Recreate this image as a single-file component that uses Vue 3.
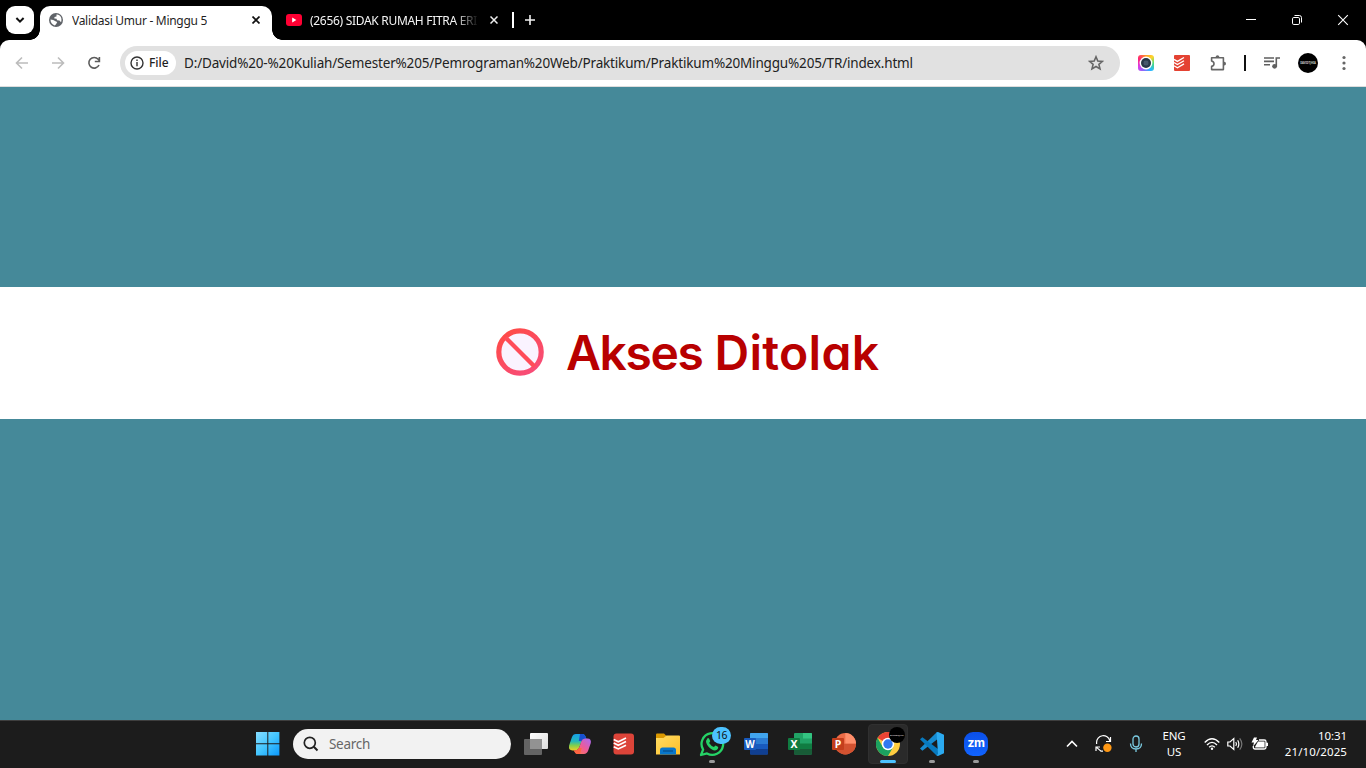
<script setup>
const url = 'D:/David%20-%20Kuliah/Semester%205/Pemrograman%20Web/Praktikum/Praktikum%20Minggu%205/TR/index.html'
</script>

<template>
  <div class="screen">
    <header class="tabstrip">
      <button class="tab-search" aria-label="Search tabs">
        <svg width="10" height="8" viewBox="0 0 10 8"><path d="M1.4 2 5 5.6 8.6 2" fill="none" stroke="#111" stroke-width="2" /></svg>
      </button>
      <div class="tab active">
        <svg class="favicon" width="14" height="14" viewBox="0 0 14 14">
          <circle cx="7" cy="7" r="7" fill="#5f6368" />
          <path d="M7.5 1.5C9 1.2 11 2.3 12 4.2 12.7 6 12.6 8 12 9.2L10.4 7.6 8 7.3 7.6 5.7 5.3 5.5 5.5 4 7.5 3.5ZM1.5 6.5 4.2 7 6.5 8.3 8.2 9.1 7.2 11 5.8 12.4C3.2 11.5 1.3 9.3 1.5 6.5Z" fill="#fff" />
        </svg>
        <span class="title t1">Validasi Umur - Minggu 5</span>
        <svg class="close" width="8" height="8" viewBox="0 0 8 8"><path d="M.5.5 7.5 7.5M7.5.5.5 7.5" stroke="#111" stroke-width="1.7" /></svg>
      </div>
      <div class="tab inactive">
        <svg class="favicon" width="16" height="12" viewBox="0 0 16 12"><rect width="16" height="12" rx="3" fill="#f03" /><path d="M6.2 3.6 10.4 6 6.2 8.4Z" fill="#fff" /></svg>
        <span class="title t2">(2656) SIDAK RUMAH FITRA ERI</span>
        <svg class="close" width="8" height="8" viewBox="0 0 8 8"><path d="M.5.5 7.5 7.5M7.5.5.5 7.5" stroke="#eee" stroke-width="1.5" /></svg>
      </div>
      <i class="tab-sep"></i>
      <svg class="plus" width="12" height="12" viewBox="0 0 12 12"><path d="M6 1V11M1 6H11" stroke="#f1f1f1" stroke-width="1.6" /></svg>
      <div class="win">
        <svg width="46" height="40" viewBox="0 0 46 40"><path d="M18 19.5H28" stroke="#fff" /></svg>
        <svg width="46" height="40" viewBox="0 0 46 40" fill="none" stroke="#fff"><rect x="18.5" y="17.5" width="7" height="7" rx="1.3" /><path d="M20.5 15.5H25.3Q27.5 15.5 27.5 17.7V22.5" /></svg>
        <svg width="46" height="40" viewBox="0 0 46 40"><path d="M18.2 15.2 27.8 24.8M27.8 15.2 18.2 24.8" stroke="#fff" stroke-width="1.1" /></svg>
      </div>
    </header>

    <nav class="toolbar">
      <svg width="36" height="34" viewBox="0 0 36 34" fill="none" stroke="#bcbcbc" stroke-width="1.6"><path d="M20 17H9M14 11.5 8.5 17 14 22.5" /></svg>
      <svg width="36" height="34" viewBox="0 0 36 34" fill="none" stroke="#bcbcbc" stroke-width="1.6"><path d="M8 17H19M14 11.5 19.5 17 14 22.5" /></svg>
      <svg width="40" height="34" viewBox="0 0 40 34" fill="none" stroke="#5c5c5c" stroke-width="1.6"><path d="M19 19A5.3 5.3 0 1 1 18.2 13.3L19.5 14.8M19.4 11V15.5H14.8" /></svg>
      <div class="omnibox">
        <div class="chip">
          <svg width="14" height="14" viewBox="0 0 14 14"><circle cx="7" cy="7" r="6" fill="none" stroke="#333" stroke-width="1.4" /><path d="M7 6V10.3M7 3.6V5" stroke="#333" stroke-width="1.4" /></svg>
          <span class="file">File</span>
        </div>
        <span class="url">{{ url }}</span>
        <svg class="star" width="16" height="16" viewBox="0 0 16 16"><path d="M8 1.8 9.8 6 14.4 6.4 10.9 9.4 12 13.9 8 11.5 4 13.9 5.1 9.4 1.6 6.4 6.2 6Z" fill="none" stroke="#666" stroke-width="1.6" /></svg>
      </div>
      <div class="exts">
        <div class="cell"><div class="lens"><svg width="16" height="16" viewBox="0 0 16 16"><circle cx="8" cy="8" r="6.4" fill="#fff" /><circle cx="8" cy="8" r="5" fill="#263745" /><circle cx="8" cy="8" r="3" fill="#46586b" stroke="#2b3d4d" /></svg></div></div>
        <div class="cell"><svg width="16" height="16" viewBox="0 0 16 16"><rect width="16" height="16" rx="1" fill="#e44232" /><path d="M0 5.4 3.4 7.4 10 3.5M0 8.6 3.4 10.6 10 6.7M0 11.8 3.4 13.8 10 9.9" transform="translate(0 -1)" fill="none" stroke="#fff" stroke-width="1.3" /></svg></div>
        <div class="cell"><svg width="18" height="18" viewBox="0 0 18 18"><path d="M2.6 3.8H14.4V15.6H2.6V12.4Q5 11.8 5 9.7T2.6 7Z" fill="none" stroke="#666" stroke-width="1.6" stroke-linejoin="round" /><path d="M6.6 3.8V3Q6.8 1.2 8.5 1.2T10.4 3V3.8ZM14.4 7.8H15.2Q17 8 17 9.7T15.2 11.6H14.4Z" fill="#666" /></svg></div>
        <i class="bar"></i>
        <div class="cell"><svg width="16" height="14" viewBox="0 0 16 14"><path d="M0 2H10M0 5.4H10M0 8.8H6M12.3 10V2H16" fill="none" stroke="#5f5f5f" stroke-width="1.6" /><circle cx="10.6" cy="10.3" r="2.4" fill="#5f5f5f" /></svg></div>
        <div class="cell"><div class="avatar"><span>DAVIDTJHIA</span></div></div>
        <div class="cell"><svg width="4" height="16" viewBox="0 0 4 16" fill="#666"><circle cx="2" cy="2.5" r="1.6" /><circle cx="2" cy="8" r="1.6" /><circle cx="2" cy="13.5" r="1.6" /></svg></div>
      </div>
    </nav>

    <main class="page">
      <section class="band">
        <svg class="ban" width="48" height="48" viewBox="0 0 48 48">
          <defs><linearGradient id="banRing" x1="0" y1="0" x2=".7" y2="1"><stop offset="0" stop-color="#ff4b43" /><stop offset="1" stop-color="#f84c76" /></linearGradient></defs>
          <circle cx="24" cy="24" r="21.2" fill="#faf3ff" stroke="url(#banRing)" stroke-width="5.2" />
          <path d="M9.5 9.5 38.5 38.5" stroke="#ff4c59" stroke-width="4.4" />
        </svg>
        <h1><span class="first">Akses</span> <span class="second">Ditolak</span></h1>
      </section>
    </main>

    <footer class="taskbar">
      <svg class="start" width="24" height="24" viewBox="0 0 24 24">
        <defs><linearGradient id="winBlue" gradientUnits="userSpaceOnUse" x1="0" y1="0" x2="24" y2="24"><stop offset="0" stop-color="#87ddff" /><stop offset=".5" stop-color="#42c5ff" /><stop offset="1" stop-color="#0895fa" /></linearGradient></defs>
        <path d="M0 0H11.3V11.3H0ZM12.3 0H23.4V11.3H12.3ZM0 12.3H11.3V23.4H0ZM12.3 12.3H23.4V23.4H12.3Z" fill="url(#winBlue)" />
      </svg>
      <div class="search">
        <svg width="16" height="16" viewBox="0 0 16 16" fill="none" stroke="#222" stroke-width="1.7"><circle cx="6.8" cy="6.8" r="5.5" /><path d="M10.8 10.8 14.5 14.5" stroke-width="2" /></svg>
        <span>Search</span>
      </div>
      <div class="apps">
        <div class="app"><svg width="24" height="24" viewBox="0 0 24 24">
          <defs><linearGradient id="tvA" x1="0" y1="0" x2="1" y2="1"><stop stop-color="#fff" /><stop offset="1" stop-color="#ddd" /></linearGradient></defs>
          <rect x="6" y="1" width="18" height="16" rx="1" fill="url(#tvA)" /><rect x="0" y="7" width="18" height="16" rx="1" fill="#646464" /><path d="M6 7H18V17H6Z" fill="#929292" /></svg></div>
        <div class="app"><svg width="24" height="24" viewBox="0 0 24 24">
          <defs>
            <linearGradient id="cpA" x1="0" y1="0" x2="0" y2="1"><stop stop-color="#169fe8" /><stop offset=".45" stop-color="#25b8b8" /><stop offset=".7" stop-color="#83cf4b" /><stop offset="1" stop-color="#f0ce25" /></linearGradient>
            <linearGradient id="cpB" x1="1" y1="0" x2="0" y2="1"><stop stop-color="#a66af8" /><stop offset=".5" stop-color="#ed5b98" /><stop offset="1" stop-color="#ff8047" /></linearGradient>
          </defs>
          <path d="M8 2H15Q17 2.3 17.8 5L18.4 7H16Q14.5 7.2 13.8 9L11.2 15.5Q9.6 18.5 7 18.5H4.5Q.3 18.3 1.1 13.5L3.8 5.4Q5 2 8 2Z" fill="url(#cpA)" /><path d="M12 2H15Q17 2.3 17.8 5L18.4 7H16Q14.5 7.2 13.6 9L10.8 9Z" fill="#174fd0" />
          <path d="M16 22H9Q7 21.7 6.2 19L5.6 18.5H7Q9.6 18.5 11.2 15.5L13.5 9Q14.5 6.4 17 6.4H19.5Q23.6 6.5 22.8 11L20.2 18.6Q19 22 16 22Z" fill="url(#cpB)" />
          <path d="M12 22H9Q7 21.7 6.2 19L5.6 18.5H7Q9.6 18.5 11 16L13.6 16Z" fill="#ff6541" />
        </svg></div>
        <div class="app"><svg width="22" height="22" viewBox="0 0 22 22"><rect x=".5" y=".5" width="20.5" height="21" rx="3" fill="#dc4439" /><path d="M.7 6.5 5.3 8.7 13 5M.7 10.1 5.3 12.3 13 8.6M.7 13.7 5.3 15.9 13 12.2" fill="none" stroke="#fff" stroke-width="1.7" /></svg></div>
        <div class="app"><svg width="24" height="24" viewBox="0 0 24 24">
          <defs><linearGradient id="fold" x1="0" y1="0" x2="1" y2="1"><stop stop-color="#ffdd65" /><stop offset="1" stop-color="#ffbf27" /></linearGradient></defs>
          <path d="M0 2.5Q0 1.5 1 1.5H8L10.5 4V8H0Z" fill="#dc9900" /><path d="M0 6H7.5L10.5 3.5H23Q24 3.5 24 4.5V22.5H0Z" fill="url(#fold)" /><path d="M4 22.5V18Q4 15.5 6.5 15.5H17.5Q20 15.5 20 18V22.5Z" fill="#0877cb" /><path d="M7 19H17" stroke="#075596" stroke-width="1.5" /></svg></div>
        <div class="app running"><svg width="26" height="26" viewBox="0 0 26 26"><path d="M4.1 18.6A10.8 10.8 0 1 1 8 22.4L2 24Z" fill="none" stroke="#25d366" stroke-width="2.3" stroke-linejoin="round" /><path d="M8.3 7.4Q9.1 6.4 10 7.5L11.2 10Q11.4 10.7 10.1 12Q12 15 15 16L16.4 14.6Q17.4 14.8 19.2 16 19.4 19 16 19.4C12.2 19 6.9 14 7 9.9Z" fill="#25d366" /></svg><b class="badge">16</b></div>
        <div class="app"><svg width="24" height="24" viewBox="0 0 24 24"><rect x="6" y="1" width="18" height="21.5" rx="1" fill="#185abd" /><path d="M6 2Q6 1 7 1H23Q24 1 24 2V6.5H6Z" fill="#41a5ee" /><path d="M6 6.5H24V12H6Z" fill="#2b7cd3" /><path d="M6 17H24V21.5Q24 22.5 23 22.5H7Q6 22.5 6 21.5Z" fill="#103f91" /><rect y="6" width="12" height="12" rx="1" fill="#185abd" /><text x="6" y="15.7" text-anchor="middle" class="letter w">W</text></svg></div>
        <div class="app"><svg width="24" height="24" viewBox="0 0 24 24"><rect x="6" y="1" width="18" height="21.5" rx="1" fill="#21a366" /><path d="M15 1H23Q24 1 24 2V6.5H15Z" fill="#33c481" /><path d="M6 11.5H15V17H6Z" fill="#107c41" /><path d="M15 11.5H24V17H15Z" fill="#107c41" /><path d="M6 17H24V21.5Q24 22.5 23 22.5H7Q6 22.5 6 21.5Z" fill="#185c37" /><rect y="6" width="12" height="12" rx="1" fill="#107c41" /><text x="6" y="15.7" text-anchor="middle" class="letter">X</text></svg></div>
        <div class="app"><svg width="24" height="24" viewBox="0 0 24 24"><circle cx="13.3" cy="11.8" r="10.7" fill="#ed6c47" /><path d="M13.3 1.1A10.7 10.7 0 0 1 24 11.8H13.3Z" fill="#ff8f6b" /><path d="M24 11.8A10.7 10.7 0 0 1 2.6 11.8Z" fill="#d35230" /><rect y="6" width="12" height="12" rx="1" fill="#c43e1c" /><text x="6" y="15.7" text-anchor="middle" class="letter">P</text></svg></div>
        <div class="app running current"><svg width="24" height="24" viewBox="0 0 24 24"><circle cx="12" cy="12" r="12" fill="#ffcd40" /><path d="M12 12 1.6 6A12 12 0 0 1 22.4 6H12Z" fill="#ea4335" /><path d="M1.6 6A12 12 0 0 0 12 24L17.2 15 12 12 6.8 15Z" fill="#1ba260" /><circle cx="12" cy="12" r="6.2" fill="#fff" /><circle cx="12" cy="12" r="4.7" fill="#3078f0" /></svg><div class="profile"><span>DAVIDTJHIA</span></div></div>
        <div class="app running"><svg width="24" height="24" viewBox="0 0 24 24"><path d="M18 6.8 2.4 18.7 0 16.6 16.5.5 18 1Z" fill="#168bd0" /><path d="M0 7.2 2.4 5.2 18 17.1V23.3L16.5 23.5Z" fill="#087abf" /><path d="M16.5.2 18 0 24 2.7V21.3L18 24 16.5 23.5 18 22Z" fill="#2baaf0" /></svg></div>
        <div class="app running"><div class="zoom">zm</div></div>
      </div>
      <div class="tray">
        <svg width="12" height="8" viewBox="0 0 12 8"><path d="M1 6.5 6 1.5 11 6.5" fill="none" stroke="#fff" stroke-width="1.6" /></svg>
        <svg class="sync" width="18" height="18" viewBox="0 0 18 18"><path d="M1.6 9V7.7A6.7 6.7 0 0 1 14.8 5.8M15.5 2V6.5H11M1 16V12H5M1.8 12.6 6 16.2H8" fill="none" stroke="#fff" stroke-width="1.2" /><circle cx="12.4" cy="12.8" r="4.2" fill="#ff9814" /></svg>
        <svg class="mic" width="14" height="18" viewBox="0 0 14 18" fill="none" stroke="#7bcbe1" stroke-width="1.3"><rect x="4" y="1" width="6" height="11" rx="3" /><path d="M1.5 8.5Q1.5 14 7 14T12.5 8.5M7 14V17" /></svg>
        <div class="lang"><span>ENG</span><span>US</span></div>
        <svg class="wifi" width="16" height="14" viewBox="0 0 16 14" fill="none" stroke="#fff" stroke-width="1.4"><path d="M.7 5.4Q8-1.8 15.3 5.4M3 8Q8 2.8 13 8M5.2 10.3Q8 7.4 10.8 10.3" /><circle cx="8" cy="11.8" r="1.2" fill="#fff" stroke="none" /></svg>
        <svg class="vol" width="16" height="14" viewBox="0 0 16 14" fill="none" stroke="#fff" stroke-width="1.2"><path d="M.8 5H3L6.8 1.6V12.4L3 9H.8ZM8.8 5Q10.2 7 8.8 9M10.7 3.2Q13 7 10.7 10.8" /><path d="M12.7 1.4Q17 7 12.7 12.6" stroke="#777" /></svg>
        <svg class="bat" width="18" height="14" viewBox="0 0 18 14"><path d="M8 3H13.3Q15 3 15 4.7V10.3Q15 12 13.3 12H4Q2.3 12 2.3 10.3V9" fill="none" stroke="#fff" stroke-width="1.3" /><path d="M7 4.4H13.6V10.6H4.2V9.4ZM15 5.8H17V9H15Z" fill="#fff" /><path d="M3 .5H6L5 3H7.5L2 9.5 3 5.5H.5Z" fill="#fff" /></svg>
        <div class="clock"><span>10:31</span><span class="date">21/10/2025</span></div>
      </div>
    </footer>
  </div>
</template>

<style>
body { margin: 0; overflow: hidden; }
</style>

<style scoped>
* { box-sizing: border-box; }
.screen { width: 1366px; height: 768px; display: flex; flex-direction: column; background: #000; font-family: "Noto Sans", "Open Sans", sans-serif; overflow: hidden; }
svg { display: block; flex: none; }
span { white-space: nowrap; }

.tabstrip { height: 40px; display: flex; align-items: flex-start; padding-left: 6px; }
.tab-search { width: 28px; height: 28px; margin: 6px 6px 0 0; padding: 0; border: 0; border-radius: 9px; background: #fff; display: flex; align-items: center; justify-content: center; }
.tab { display: flex; align-items: center; flex: none; position: relative; }
.active { width: 232px; height: 34px; margin-top: 6px; padding: 0 12px 6px 9px; border-radius: 10px 10px 0 0; background: #fff; }
.active::before, .active::after { content: ""; position: absolute; bottom: 0; width: 10px; height: 10px; }
.active::before { left: -10px; background: radial-gradient(circle at 0 0, transparent 9.5px, #fff 10px); }
.active::after { right: -10px; background: radial-gradient(circle at 100% 0, transparent 9.5px, #fff 10px); }
.title { font-size: 12px; line-height: 18px; overflow: hidden; position: relative; top: 1px; }
.t1 { margin-left: 9px; color: #1f1f1f; letter-spacing: -0.29px; }
.close { margin-left: auto; }
.inactive { width: 226px; height: 28px; margin-top: 6px; padding-left: 14px; }
.t2 { width: 167px; margin-left: 8px; color: #f4f4f4; letter-spacing: -0.3px; -webkit-mask-image: linear-gradient(90deg, #000 145px, transparent 169px); mask-image: linear-gradient(90deg, #000 145px, transparent 169px); }
.inactive .close { margin-left: 13px; }
.tab-sep { width: 2px; height: 16px; margin: 12px 0 0 14px; background: #fff; }
.plus { margin: 14px 0 0 10px; }
.win { display: flex; margin-left: auto; }

.toolbar { height: 47px; display: flex; align-items: flex-start; padding: 6px 0 0 8px; background: #fff; border-radius: 9px 9px 0 0; border-bottom: 1px solid #ddd; }
.omnibox { width: 1000px; height: 34px; border-radius: 17px; background: #e1e1e1; display: flex; align-items: center; padding: 0 16px 0 5px; }
.chip { width: 51px; height: 24px; border-radius: 12px; background: #fff; display: flex; align-items: center; padding-left: 5px; gap: 5px; }
.file { font-size: 12px; font-weight: 500; color: #1f1f1f; line-height: 18px; }
.url { margin-left: 8px; font-size: 13.5px; line-height: 20px; color: #222; letter-spacing: -0.17px; }
.star { margin-left: auto; }
.exts { display: flex; align-items: center; height: 34px; margin-left: 8px; }
.cell { width: 36px; display: flex; align-items: center; justify-content: center; }
.bar { width: 2px; height: 16px; background: #111; margin: 0 8px; }
.lens { width: 16px; height: 16px; border-radius: 3px; background: conic-gradient(#ff9c23, #ffd42c 45deg, #50dc75 90deg, #25baff 145deg, #7a75ff 190deg, #dc3ce8 245deg, #ff2474 300deg, #ff9c23); }
.avatar { width: 20px; height: 20px; border-radius: 50%; background: #000; display: flex; align-items: center; justify-content: center; overflow: hidden; }
.avatar span, .profile span { font-size: 2.7px; font-weight: 700; color: #ccc; line-height: 4px; }
.profile span { font-size: 2.4px; }

.page { height: 633px; background: #458999; padding-top: 200px; }
.band { height: 132px; background: #fff; display: flex; justify-content: flex-start; align-items: center; padding: 0 0 2px 496px; }
h1 { margin: 1px 0 0 22px; font-family: Inter, sans-serif; font-size: 48px; line-height: 72px; font-weight: 600; color: #b80000; font-feature-settings: "cv11" 1; white-space: nowrap; }
.first { letter-spacing: -1.4px; }
.second { letter-spacing: 0.3px; }

.taskbar { height: 48px; display: flex; align-items: center; background: #1c1c1c; border-top: 1px solid #3e3e3e; padding: 0 0 1px 256px; }
.start { margin-right: 13px; }
.search { width: 218px; height: 30px; border-radius: 15px; background: #f2f2f2; display: flex; align-items: center; padding-left: 10px; flex: none; }
.search span { margin-left: 10px; font-size: 13.5px; color: #666; letter-spacing: -0.3px; }
.apps { display: flex; margin-left: 3px; }
.app { width: 44px; height: 40px; display: flex; align-items: center; justify-content: center; position: relative; }
.running::after { content: ""; position: absolute; left: 19px; bottom: 1px; width: 6px; height: 3px; border-radius: 2px; background: #9a9a9a; }
.current::before { content: ""; position: absolute; inset: 0 2px; border-radius: 4px; background: #2a2a2a; border: 1px solid #303030; }
.current svg { position: relative; }
.current::after { left: 14px; width: 16px; background: #4cc2ff; }
.badge { position: absolute; left: 22px; top: 3px; width: 19px; height: 17px; border-radius: 9px; background: #4cc2ff; color: #111; font-size: 10.5px; font-weight: 400; line-height: 17px; text-align: center; letter-spacing: -0.5px; }
.letter { font-family: "Noto Sans", sans-serif; font-size: 10.5px; font-weight: 700; fill: #fff; }
.w { font-size: 9.8px; }
.profile { position: absolute; left: 23px; top: 3px; width: 16px; height: 16px; border-radius: 50%; background: #000; display: flex; align-items: center; justify-content: center; overflow: hidden; }
.zoom { width: 24px; height: 24px; border-radius: 9px; background: linear-gradient(#0b4fe8, #1164ff); color: #fff; font-family: Inter, sans-serif; font-weight: 700; font-size: 12px; line-height: 22px; text-align: center; letter-spacing: -0.3px; }
.tray { margin-left: auto; padding-right: 19px; display: flex; align-items: center; color: #fff; }
.sync { margin-left: 17px; }
.mic { margin-left: 16px; }
.lang, .clock { display: flex; flex-direction: column; font-size: 11.5px; line-height: 16px; }
.lang { width: 26px; align-items: center; margin-left: 18px; letter-spacing: -0.2px; }
.wifi { margin-left: 17px; }
.vol { margin-left: 7px; }
.bat { margin-left: 8px; }
.clock { width: 62px; margin-left: 16px; align-items: flex-end; letter-spacing: -0.1px; }
.date { letter-spacing: 0.1px; }
</style>
